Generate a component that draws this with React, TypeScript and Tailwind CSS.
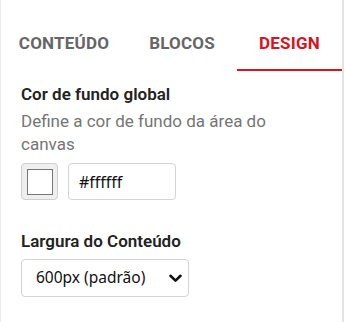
import { useState } from "react";

const tabs = ["Conteúdo", "Blocos", "Design"];

function Chevron() {
  return (
    <svg width="13" height="9" viewBox="0 0 13 9" fill="none">
      <path d="M1.5 1.8 6.5 6.6 11.5 1.8" stroke="#111" strokeWidth="2.6" strokeLinecap="round" strokeLinejoin="round" />
    </svg>
  );
}

export default function App() {
  const [active, setActive] = useState(2);
  const [hex, setHex] = useState("#ffffff");

  return (
    <div className="flex h-[322px] w-[345px] bg-white font-['Roboto',sans-serif]">
      <div className="flex w-[342px] flex-col border-l border-[#ececec]">
        <div className="flex pt-[19px]">
          {tabs.map((t, i) => (
            <button
              key={t}
              onClick={() => setActive(i)}
              className={`flex h-[52px] items-center justify-center border-b-2 text-[17px] font-bold uppercase tracking-[0.2px] ${
                i === 0 ? "w-[126px]" : i === 1 ? "w-[110px]" : "flex-1"
              } ${
                active === i
                  ? "border-[#d9131f] text-[#d9131f]"
                  : "border-transparent text-[#666666]"
              }`}
            >
              {t}
            </button>
          ))}
        </div>

        <div className="flex flex-col px-5 pt-[12px]">
          <h3 className="text-[17px] font-semibold leading-[22px] text-[#222222]">
            Cor de fundo global
          </h3>
          <p className="mt-[5px] w-[290px] text-[17px] leading-[23px] text-[#757575]">
            Define a cor de fundo da área do canvas
          </p>
          <div className="mt-[7px] flex gap-[10px]">
            <div className="flex h-[37px] w-[37px] items-center justify-center rounded-[4px] border border-[#cfcfcf] bg-[#efefef]">
              <div className="h-[26px] w-[26px] border border-[#767676] bg-white" />
            </div>
            <input
              value={hex}
              onChange={(e) => setHex(e.target.value)}
              className="h-[37px] w-[108px] rounded-[4px] border border-[#d4d4d4] px-[10px] font-['Noto_Sans',sans-serif] text-[16px] text-[#111] outline-none"
            />
          </div>

          <h3 className="mt-[30px] text-[17px] font-semibold leading-[22px] text-[#222222]">
            Largura do Conteúdo
          </h3>
          <div className="mt-[7px] flex h-[38px] w-[168px] items-center justify-between rounded-[4px] border border-[#d4d4d4] pl-[14px] pr-[6px] font-['Noto_Sans',sans-serif] text-[15.5px] text-[#111]">
            <span>600px (padrão)</span>
            <Chevron />
          </div>
        </div>
      </div>
      <div className="w-[2px] bg-[#e3e3e3]" />
      <div className="w-[1px] bg-white" />
    </div>
  );
}
